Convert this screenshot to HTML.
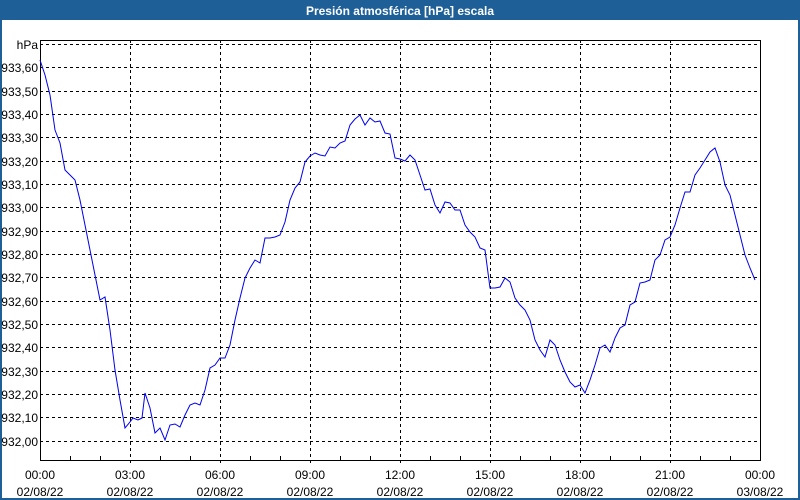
<!DOCTYPE html>
<html><head><meta charset="utf-8"><style>
html,body{margin:0;padding:0;width:800px;height:500px;overflow:hidden;background:#fff;font-family:"Liberation Sans","DejaVu Sans",sans-serif}
</style></head><body>
<svg width="800" height="500" xmlns="http://www.w3.org/2000/svg" style="display:block">
<rect x="0" y="0" width="800" height="500" fill="#1d5f96"/>
<rect x="2" y="20" width="796" height="478" fill="#fff"/>
<text x="400" y="15" text-anchor="middle" fill="#fff" font-size="12" font-weight="bold">Presión atmosférica [hPa] escala</text>
<g stroke="#000" stroke-width="1" stroke-dasharray="3,3" fill="none">
<line x1="40" y1="44.5" x2="760" y2="44.5"/><line x1="40" y1="67.5" x2="760" y2="67.5"/><line x1="40" y1="91.5" x2="760" y2="91.5"/><line x1="40" y1="114.5" x2="760" y2="114.5"/><line x1="40" y1="137.5" x2="760" y2="137.5"/><line x1="40" y1="161.5" x2="760" y2="161.5"/><line x1="40" y1="184.5" x2="760" y2="184.5"/><line x1="40" y1="207.5" x2="760" y2="207.5"/><line x1="40" y1="231.5" x2="760" y2="231.5"/><line x1="40" y1="254.5" x2="760" y2="254.5"/><line x1="40" y1="277.5" x2="760" y2="277.5"/><line x1="40" y1="301.5" x2="760" y2="301.5"/><line x1="40" y1="324.5" x2="760" y2="324.5"/><line x1="40" y1="347.5" x2="760" y2="347.5"/><line x1="40" y1="371.5" x2="760" y2="371.5"/><line x1="40" y1="394.5" x2="760" y2="394.5"/><line x1="40" y1="417.5" x2="760" y2="417.5"/><line x1="40" y1="441.5" x2="760" y2="441.5"/>
<line x1="130.5" y1="40" x2="130.5" y2="466"/><line x1="220.5" y1="40" x2="220.5" y2="466"/><line x1="310.5" y1="40" x2="310.5" y2="466"/><line x1="400.5" y1="40" x2="400.5" y2="466"/><line x1="490.5" y1="40" x2="490.5" y2="466"/><line x1="580.5" y1="40" x2="580.5" y2="466"/><line x1="670.5" y1="40" x2="670.5" y2="466"/>
</g>
<path d="M40.5 40.5 H760.5 V460.5 H40.5 Z" stroke="#000" fill="none"/>
<g stroke="#000"><line x1="70.5" y1="456" x2="70.5" y2="461"/><line x1="100.5" y1="456" x2="100.5" y2="461"/><line x1="160.5" y1="456" x2="160.5" y2="461"/><line x1="190.5" y1="456" x2="190.5" y2="461"/><line x1="250.5" y1="456" x2="250.5" y2="461"/><line x1="280.5" y1="456" x2="280.5" y2="461"/><line x1="340.5" y1="456" x2="340.5" y2="461"/><line x1="370.5" y1="456" x2="370.5" y2="461"/><line x1="430.5" y1="456" x2="430.5" y2="461"/><line x1="460.5" y1="456" x2="460.5" y2="461"/><line x1="520.5" y1="456" x2="520.5" y2="461"/><line x1="550.5" y1="456" x2="550.5" y2="461"/><line x1="610.5" y1="456" x2="610.5" y2="461"/><line x1="640.5" y1="456" x2="640.5" y2="461"/><line x1="700.5" y1="456" x2="700.5" y2="461"/><line x1="730.5" y1="456" x2="730.5" y2="461"/></g>
<polyline fill="none" stroke="#0000ee" stroke-width="1" points="40,60 45,75 50,95 55,130 60,143 65,170 70,175 75,180 80,200 85,225 90,250 95,275 100,300 105,297 110,330 115,370 120,400 125,428 130,422 133,418 138,420 142,418 145,393 150,408 155,433 160,428 165,440 170,425 175,424 180,427 185,415 190,405 195,403 200,405 205,390 210,368 215,365 220,358 225,358 230,345 235,320 240,298 245,278 250,268 255,260 260,263 265,238 270,238 275,237 280,235 285,222 290,200 295,188 300,182 305,162 310,156 315,153 320,155 325,156 330,147 335,148 340,143 345,141 350,125 355,119 360,115 365,125 370,118 375,122 380,121 385,133 390,134 395,158 400,159 405,161 410,155 415,160 420,175 425,190 430,189 435,205 440,213 445,202 450,203 455,210 460,210 465,225 470,232 475,237 480,248 485,250 490,288 495,288 500,287 505,278 510,282 515,298 520,305 525,310 530,320 535,340 540,350 545,357 550,340 555,345 560,360 565,372 570,382 575,387 580,385 585,393 590,380 595,365 600,348 605,345 610,352 615,338 620,328 625,325 630,305 635,302 640,283 645,282 650,280 655,260 660,255 665,240 670,237 675,225 680,208 685,192 690,192 695,175 700,168 705,160 710,152 715,148 720,162 725,185 730,195 735,215 740,235 745,255 750,268 755,280"/>
<g font-size="12" fill="#000" text-anchor="end">
<text x="38" y="49">hPa</text><text x="38" y="72">933,60</text><text x="38" y="96">933,50</text><text x="38" y="119">933,40</text><text x="38" y="142">933,30</text><text x="38" y="166">933,20</text><text x="38" y="189">933,10</text><text x="38" y="212">933,00</text><text x="38" y="236">932,90</text><text x="38" y="259">932,80</text><text x="38" y="282">932,70</text><text x="38" y="306">932,60</text><text x="38" y="329">932,50</text><text x="38" y="352">932,40</text><text x="38" y="376">932,30</text><text x="38" y="399">932,20</text><text x="38" y="422">932,10</text><text x="38" y="446">932,00</text>
</g>
<g font-size="12" fill="#000" text-anchor="middle">
<text x="40" y="479">00:00</text><text x="40" y="496">02/08/22</text>
<text x="130" y="479">03:00</text><text x="130" y="496">02/08/22</text>
<text x="220" y="479">06:00</text><text x="220" y="496">02/08/22</text>
<text x="310" y="479">09:00</text><text x="310" y="496">02/08/22</text>
<text x="400" y="479">12:00</text><text x="400" y="496">02/08/22</text>
<text x="490" y="479">15:00</text><text x="490" y="496">02/08/22</text>
<text x="580" y="479">18:00</text><text x="580" y="496">02/08/22</text>
<text x="670" y="479">21:00</text><text x="670" y="496">02/08/22</text>
<text x="760" y="479">00:00</text><text x="760" y="496">03/08/22</text>
</g>
</svg>
</body></html>
